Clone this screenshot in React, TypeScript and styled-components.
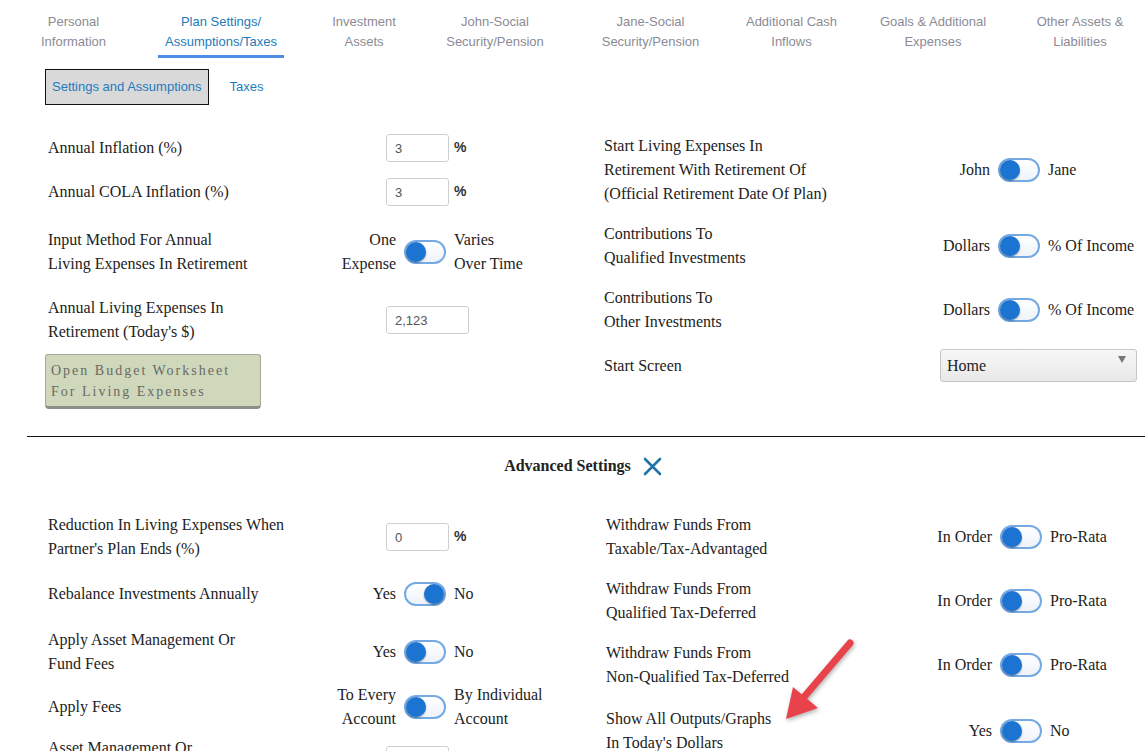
import React from 'react';
import styled, { createGlobalStyle } from 'styled-components';

const GlobalStyle = createGlobalStyle`
  html, body { margin: 0; padding: 0; overflow: hidden; background: #ffffff; }
  body { font-family: "Liberation Serif", "Times New Roman", serif; }
  * { box-sizing: border-box; }
`;

const Page = styled.div`
  position: relative;
  width: 1145px;
  height: 751px;
  overflow: hidden;
  background: #fff;
`;

const TabBar = styled.nav`
  display: grid;
  grid-template-columns: 147px 148px 138px 124px 187px 95px 188px 106px;
  padding-top: 12px;
`;

const Tab = styled.div`
  display: flex;
  justify-content: center;
`;

const TabLabel = styled.span<{ $active?: boolean }>`
  font-family: "Liberation Sans", Arial, sans-serif;
  font-size: 13px;
  line-height: 20px;
  text-align: center;
  white-space: nowrap;
  color: ${(p) => (p.$active ? '#1f7ab8' : '#8b8b96')};
  padding: 0 7px 3px;
  border-bottom: 3px solid ${(p) => (p.$active ? '#4d8de6' : 'transparent')};
`;

const SubTabs = styled.div`
  display: flex;
  align-items: center;
  gap: 21px;
  margin: 11px 0 0 45px;
`;

const SubTab = styled.div<{ $active?: boolean }>`
  font-family: "Liberation Sans", Arial, sans-serif;
  font-size: 13px;
  line-height: 20px;
  color: #1f7bbd;
  padding: ${(p) => (p.$active ? '7px 6px' : '7px 0')};
  background: ${(p) => (p.$active ? '#d9d9d9' : 'transparent')};
  border: ${(p) => (p.$active ? '1px solid #111' : 'none')};
`;

const Content = styled.div`
  margin-left: 27px;
`;

const FormGrid = styled.div<{ $left: number; $top: number }>`
  display: grid;
  grid-template-columns: ${(p) => p.$left}px 1fr;
  padding: ${(p) => p.$top}px 0 0 21px;
`;

const Column = styled.div`
  display: flex;
  flex-direction: column;
`;

const Row = styled.div<{ $label: number; $mt?: number }>`
  display: grid;
  grid-template-columns: ${(p) => p.$label}px 1fr;
  align-items: center;
  margin-top: ${(p) => p.$mt ?? 0}px;
`;

const Label = styled.div`
  font-size: 16px;
  line-height: 24px;
  color: #222;
  white-space: nowrap;
`;

const InputGroup = styled.div`
  display: flex;
  align-items: center;
  gap: 5px;
`;

const TextInput = styled.div<{ $w?: number }>`
  width: ${(p) => p.$w ?? 63}px;
  height: 28px;
  border: 1px solid #cfcfcf;
  border-radius: 3px;
  padding: 0 8px;
  display: flex;
  align-items: center;
  font-family: "Liberation Sans", Arial, sans-serif;
  font-size: 13px;
  color: #555;
`;

const Unit = styled.span`
  font-family: "Liberation Sans", Arial, sans-serif;
  font-size: 14px;
  font-weight: 700;
  color: #333;
  margin-top: -3px;
`;

const ToggleGroup = styled.div<{ $shift?: number }>`
  display: grid;
  grid-template-columns: 60px 42px auto;
  column-gap: 8px;
  align-items: center;
  margin-left: ${(p) => p.$shift ?? 0}px;
`;

const Option = styled.span<{ $align?: 'left' | 'right' }>`
  font-size: 16px;
  line-height: 24px;
  color: #222;
  white-space: nowrap;
  text-align: ${(p) => p.$align ?? 'left'};
  justify-self: ${(p) => (p.$align === 'right' ? 'end' : 'start')};
`;

const SwitchTrack = styled.span<{ $on?: boolean }>`
  display: flex;
  justify-content: ${(p) => (p.$on ? 'flex-end' : 'flex-start')};
  align-items: center;
  width: 42px;
  height: 24px;
  border-radius: 12px;
  border: 2px solid #74a9e4;
  background: linear-gradient(#ffffff, #eef3fa);
`;

const Knob = styled.span`
  width: 20px;
  height: 20px;
  border-radius: 50%;
  background: #1b74d1;
  box-shadow: 0 1px 2px rgba(0, 0, 0, 0.35);
`;

const WorksheetButton = styled.div`
  width: 216px;
  height: 55px;
  margin-left: -3px;
  padding: 5px 5px 0;
  background: #cfd8bb;
  border: 1px solid #a3a897;
  border-bottom: 3px solid #8e9087;
  border-radius: 3px 3px 4px 4px;
  font-size: 14px;
  line-height: 21px;
  letter-spacing: 2px;
  color: #6a6a66;
  white-space: nowrap;
`;

const FakeSelect = styled.div`
  width: 197px;
  height: 33px;
  margin-left: 10px;
  border: 1px solid #c6c6c6;
  border-radius: 3px;
  background: linear-gradient(#f7f7f7, #e8e8e8);
  display: flex;
  justify-content: space-between;
  padding: 0 10px 0 6px;
`;

const SelectText = styled.span`
  align-self: center;
  font-size: 16px;
  color: #222;
`;

const Caret = styled.span`
  margin-top: 6px;
  width: 0;
  height: 0;
  border-left: 4px solid transparent;
  border-right: 4px solid transparent;
  border-top: 7px solid #777;
`;

const Divider = styled.hr`
  margin: 27px 0 0;
  border: none;
  border-top: 1px solid #111;
  height: 0;
`;

const Heading = styled.div`
  display: flex;
  justify-content: center;
  align-items: center;
  gap: 12px;
  margin-top: 17px;
  padding-right: 6px;
`;

const HeadingText = styled.span`
  font-size: 16px;
  line-height: 24px;
  font-weight: 700;
  color: #222;
`;

const ArrowMark = styled.svg`
  position: absolute;
  left: 776px;
  top: 634px;
  pointer-events: none;
  filter: drop-shadow(1px 2px 2px rgba(0, 0, 0, 0.3));
`;

const Toggle = ({ left, right, on, shift }: { left: React.ReactNode; right: React.ReactNode; on?: boolean; shift?: number }) => (
  <ToggleGroup $shift={shift}>
    <Option $align="right">{left}</Option>
    <SwitchTrack $on={on}>
      <Knob />
    </SwitchTrack>
    <Option>{right}</Option>
  </ToggleGroup>
);

const tabs: { label: React.ReactNode; active?: boolean }[] = [
  { label: <>Personal<br />Information</> },
  { label: <>Plan Settings/<br />Assumptions/Taxes</>, active: true },
  { label: <>Investment<br />Assets</> },
  { label: <>John-Social<br />Security/Pension</> },
  { label: <>Jane-Social<br />Security/Pension</> },
  { label: <>Additional Cash<br />Inflows</> },
  { label: <>Goals &amp; Additional<br />Expenses</> },
  { label: <>Other Assets &amp;<br />Liabilities</> },
];

export default function App() {
  return (
    <Page>
      <GlobalStyle />
      <TabBar>
        {tabs.map((t, i) => (
          <Tab key={i}>
            <TabLabel $active={t.active}>{t.label}</TabLabel>
          </Tab>
        ))}
      </TabBar>
      <SubTabs>
        <SubTab $active>Settings and Assumptions</SubTab>
        <SubTab>Taxes</SubTab>
      </SubTabs>

      <Content>
        <FormGrid $left={556} $top={29}>
          <Column>
            <Row $label={338}>
              <Label>Annual Inflation (%)</Label>
              <InputGroup>
                <TextInput>3</TextInput>
                <Unit>%</Unit>
              </InputGroup>
            </Row>
            <Row $label={338} $mt={16}>
              <Label>Annual COLA Inflation (%)</Label>
              <InputGroup>
                <TextInput>3</TextInput>
                <Unit>%</Unit>
              </InputGroup>
            </Row>
            <Row $label={338} $mt={22}>
              <Label>Input Method For Annual<br />Living Expenses In Retirement</Label>
              <Toggle shift={-50} left={<>One<br />Expense</>} right={<>Varies<br />Over Time</>} />
            </Row>
            <Row $label={338} $mt={20}>
              <Label>Annual Living Expenses In<br />Retirement (Today's $)</Label>
              <InputGroup>
                <TextInput $w={83}>2,123</TextInput>
              </InputGroup>
            </Row>
            <Row $label={338} $mt={10}>
              <WorksheetButton>Open Budget Worksheet<br />For Living Expenses</WorksheetButton>
            </Row>
          </Column>
          <Column>
            <Row $label={326}>
              <Label>Start Living Expenses In<br />Retirement With Retirement Of<br />(Official Retirement Date Of Plan)</Label>
              <Toggle left="John" right="Jane" />
            </Row>
            <Row $label={326} $mt={16}>
              <Label>Contributions To<br />Qualified Investments</Label>
              <Toggle left="Dollars" right="% Of Income" />
            </Row>
            <Row $label={326} $mt={16}>
              <Label>Contributions To<br />Other Investments</Label>
              <Toggle left="Dollars" right="% Of Income" />
            </Row>
            <Row $label={326} $mt={15}>
              <Label>Start Screen</Label>
              <FakeSelect>
                <SelectText>Home</SelectText>
                <Caret />
              </FakeSelect>
            </Row>
          </Column>
        </FormGrid>

        <Divider />

        <Heading>
          <HeadingText>Advanced Settings</HeadingText>
          <svg width="19" height="19" viewBox="0 0 19 19">
            <path d="M2 2 L17 17 M17 2 L2 17" stroke="#2173a6" strokeWidth="2.6" strokeLinecap="round" fill="none" />
          </svg>
        </Heading>

        <FormGrid $left={558} $top={35}>
          <Column>
            <Row $label={338}>
              <Label>Reduction In Living Expenses When<br />Partner's Plan Ends (%)</Label>
              <InputGroup>
                <TextInput>0</TextInput>
                <Unit>%</Unit>
              </InputGroup>
            </Row>
            <Row $label={338} $mt={21}>
              <Label>Rebalance Investments Annually</Label>
              <Toggle shift={-50} left="Yes" right="No" on />
            </Row>
            <Row $label={338} $mt={22}>
              <Label>Apply Asset Management Or<br />Fund Fees</Label>
              <Toggle shift={-50} left="Yes" right="No" />
            </Row>
            <Row $label={338} $mt={7}>
              <Label>Apply Fees</Label>
              <Toggle shift={-50} left={<>To Every<br />Account</>} right={<>By Individual<br />Account</>} />
            </Row>
            <Row $label={338} $mt={5}>
              <Label>Asset Management Or<br />Fund Fees (%)</Label>
              <InputGroup>
                <TextInput>1</TextInput>
                <Unit>%</Unit>
              </InputGroup>
            </Row>
          </Column>
          <Column>
            <Row $label={326}>
              <Label>Withdraw Funds From<br />Taxable/Tax-Advantaged</Label>
              <Toggle left="In Order" right="Pro-Rata" />
            </Row>
            <Row $label={326} $mt={16}>
              <Label>Withdraw Funds From<br />Qualified Tax-Deferred</Label>
              <Toggle left="In Order" right="Pro-Rata" />
            </Row>
            <Row $label={326} $mt={16}>
              <Label>Withdraw Funds From<br />Non-Qualified Tax-Deferred</Label>
              <Toggle left="In Order" right="Pro-Rata" />
            </Row>
            <Row $label={326} $mt={18}>
              <Label>Show All Outputs/Graphs<br />In Today's Dollars</Label>
              <Toggle left="Yes" right="No" />
            </Row>
          </Column>
        </FormGrid>
      </Content>

      <ArrowMark width="84" height="92" viewBox="0 0 84 92">
        <path d="M74 9 L28 63" stroke="#e8434b" strokeWidth="7" strokeLinecap="round" fill="none" />
        <polygon points="10,85 17,53 42,74" fill="#e8434b" />
      </ArrowMark>
    </Page>
  );
}
